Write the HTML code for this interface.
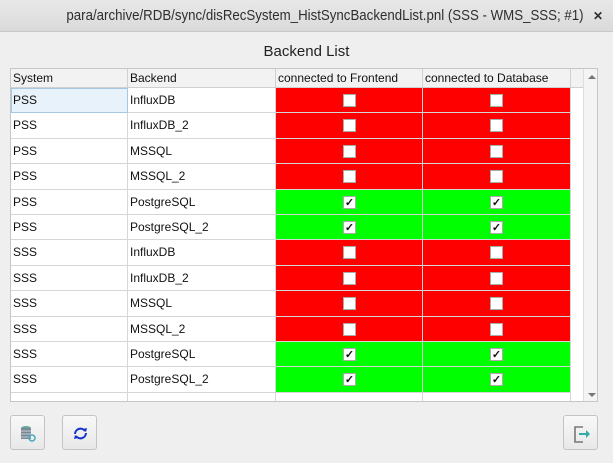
<!DOCTYPE html>
<html><head><style>
*{margin:0;padding:0;box-sizing:border-box}
body{width:613px;height:463px;background:#efefef;font-family:"Liberation Sans",sans-serif;position:relative;overflow:hidden}
.tb{position:absolute;left:0;top:0;width:613px;height:32px;background:linear-gradient(#e8e8e8,#dadada);border-bottom:1px solid #c8c8c8;font-size:15px;color:#2e2e2e;line-height:32px}
.tb .t{position:absolute;left:325px;top:0;white-space:nowrap;transform:translateX(-50%) scaleX(0.885)}
.tb .x{position:absolute;left:593px;top:0;font-size:12px;font-weight:bold}
.ttl{position:absolute;left:0;width:613px;top:43px;text-align:center;font-size:15px;color:#222}
.tbl{position:absolute;left:10px;top:68px;width:588px;height:334px;background:#fff;border:1px solid #c6c6c6;overflow:hidden}
.c{position:absolute;font-size:12px;color:#111;line-height:25px;padding-left:2px;border-right:1px solid #d6d6d6;border-bottom:1px solid #d6d6d6;height:25.4px}
.h{background:#f2f2f2;line-height:18px;height:19px;border-color:#d0d0d0}
.r{background:#f00}.g{background:#0f0}
.cb{position:absolute;left:67px;top:6px;width:13px;height:13px;background:#fff;border:1px solid #aaa;font-size:11px;line-height:12px;text-align:center;font-weight:bold;color:#111}
.sb{position:absolute;left:572px;top:0;width:16px;height:334px;background:#f4f4f4;border-left:1px solid #ddd}
.btn{position:absolute;top:415px;width:35px;height:35px;background:linear-gradient(#f8f8f8,#e8e8e8);border:1px solid #c4c4c4;border-radius:3px}
</style></head><body>
<div class="tb"><span class="t">para/archive/RDB/sync/disRecSystem_HistSyncBackendList.pnl (SSS - WMS_SSS; #1)</span><span class="x">✕</span></div>
<div class="ttl">Backend List</div>
<div class="tbl" id="t">
<div class="c h" style="left:0;top:0;width:117px">System</div>
<div class="c h" style="left:117px;top:0;width:148px">Backend</div>
<div class="c h" style="left:265px;top:0;width:147px">connected to Frontend</div>
<div class="c h" style="left:412px;top:0;width:148px">connected to Database</div>
<div class="c h" style="left:560px;top:0;width:12px;border-right:none"></div>
<div class="sb"><div style="position:absolute;left:4px;top:6px;border:4px solid transparent;border-bottom:4px solid #777;border-top:none"></div><div style="position:absolute;left:4px;bottom:6px;border:4px solid transparent;border-top:4px solid #777;border-bottom:none"></div></div>
</div>
<div class="btn" style="left:10px"><svg width="35" height="35"><ellipse cx="15" cy="12" rx="5" ry="2" fill="#6a9"/><rect x="10" y="12" width="10" height="11" fill="#789"/><path d="M10 15h10M10 18h10M10 21h10" stroke="#ccc"/><circle cx="21" cy="22" r="3" fill="none" stroke="#4ab" stroke-width="1.5"/></svg></div>
<div class="btn" style="left:62px"><svg width="35" height="35"><path d="M12 18a5.5 5.5 0 0 1 10-3" fill="none" stroke="#1133cc" stroke-width="2"/><path d="M23 17a5.5 5.5 0 0 1-10 3" fill="none" stroke="#1133cc" stroke-width="2"/><path d="M20 13l3 3 1-4z M15 22l-3-3-1 4z" fill="#1133cc"/></svg></div>
<div class="btn" style="left:563px"><svg width="35" height="35"><path d="M19 11h-8v15h8" fill="none" stroke="#777" stroke-width="1.6"/><path d="M15 18h10" stroke="#3aa" stroke-width="2"/><path d="M22 14l4 4-4 4z" fill="#3aa"/></svg></div>
<script>
var d=[["PSS","InfluxDB",0],["PSS","InfluxDB_2",0],["PSS","MSSQL",0],["PSS","MSSQL_2",0],["PSS","PostgreSQL",1],["PSS","PostgreSQL_2",1],["SSS","InfluxDB",0],["SSS","InfluxDB_2",0],["SSS","MSSQL",0],["SSS","MSSQL_2",0],["SSS","PostgreSQL",1],["SSS","PostgreSQL_2",1],["","",2]];
var t=document.getElementById('t'),h='';
d.forEach(function(r,i){var y=19+i*25.4;
var cl=r[2]==2?'':(r[2]?'g':'r');var ck=r[2]==2?'':'<div class="cb">'+(r[2]?'✓':'')+'</div>';
h+='<div class="c" style="left:0;top:'+y+'px;width:117px;'+(i==0?'background:#e8f2fa;border:1px solid #a8c8e0;line-height:23px;padding-left:1px':'')+'">'+r[0]+'</div>';
h+='<div class="c" style="left:117px;top:'+y+'px;width:148px">'+r[1]+'</div>';
h+='<div class="c '+cl+'" style="left:265px;top:'+y+'px;width:147px">'+ck+'</div>';
h+='<div class="c '+cl+'" style="left:412px;top:'+y+'px;width:148px">'+ck+'</div>';});
t.insertAdjacentHTML('beforeend',h);
</script>
</body></html>
